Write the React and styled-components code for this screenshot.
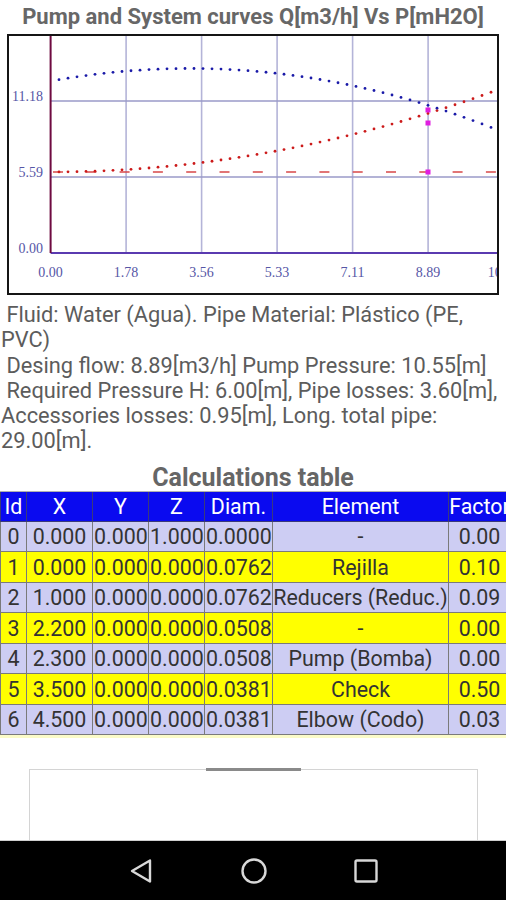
import React from "react";
import styled, { createGlobalStyle } from "styled-components";

const GlobalStyle = createGlobalStyle`
  html, body {
    margin: 0;
    padding: 0;
    background: #fff;
    overflow: hidden;
  }
  body {
    font-family: Roboto, "Noto Sans", sans-serif;
  }
`;

// chart geometry, in page pixels
const X0 = 50.6;
const XSTEP = 75.5;
const Y_AXIS = 253;
const XLABELS = ["0.00", "1.78", "3.56", "5.33", "7.11", "8.89", "10.67"];
const YLABELS = [
  { label: "11.18", y: 101 },
  { label: "5.59", y: 177 },
  { label: "0.00", y: 253 },
];

const pumpY = (x) => 68.5 + 6.5e-4 * (x - 190) * (x - 190);
const systemY = (x) => 172 - 4.1e-4 * (x - 50) * (x - 50);

const dotsX = [];
for (let x = 59; x <= 496; x += 9) dotsX.push(x);

const rows = [
  { id: 0, x: "0.000", y: "0.0000", z: "1.0000", d: "0.0000", el: "-", f: "0.00" },
  { id: 1, x: "0.000", y: "0.0000", z: "0.0000", d: "0.0762", el: "Rejilla", f: "0.10" },
  { id: 2, x: "1.000", y: "0.0000", z: "0.0000", d: "0.0762", el: "Reducers (Reduc.)", f: "0.09" },
  { id: 3, x: "2.200", y: "0.0000", z: "0.0000", d: "0.0508", el: "-", f: "0.00" },
  { id: 4, x: "2.300", y: "0.0000", z: "0.0000", d: "0.0508", el: "Pump (Bomba)", f: "0.00" },
  { id: 5, x: "3.500", y: "0.0000", z: "0.0000", d: "0.0381", el: "Check", f: "0.50" },
  { id: 6, x: "4.500", y: "0.0000", z: "0.0000", d: "0.0381", el: "Elbow (Codo)", f: "0.03" },
];

const colWidths = [26, 66, 56, 56, 68, 176, 62];

const PumpChart = () => (
  <ChartBox>
    <svg width="488" height="257" viewBox="9 36 488 257">
      {XLABELS.slice(1, 6).map((_, i) => (
        <line
          key={"v" + i}
          x1={X0 + (i + 1) * XSTEP}
          x2={X0 + (i + 1) * XSTEP}
          y1={36}
          y2={Y_AXIS}
          stroke="#b4b4d8"
          strokeWidth="1.6"
        />
      ))}
      {YLABELS.slice(0, 2).map((l) => (
        <line key={l.label} x1={X0} x2={497} y1={l.y} y2={l.y} stroke="#9a9ac8" strokeWidth="1.4" />
      ))}
      <line x1={X0} x2={497} y1={Y_AXIS} y2={Y_AXIS} stroke="#5a3ab0" strokeWidth="2.2" />
      <line x1={X0} x2={X0} y1={36} y2={Y_AXIS} stroke="#6e0a40" strokeWidth="2" />

      {YLABELS.map((l) => (
        <AxisText key={l.label} x={43} y={l.y} textAnchor="end">
          {l.label}
        </AxisText>
      ))}
      {XLABELS.map((l, i) => (
        <AxisText key={l} x={X0 + i * XSTEP} y={277} textAnchor="middle">
          {l}
        </AxisText>
      ))}

      <line
        x1={53}
        x2={497}
        y1={172}
        y2={172}
        stroke="#d84848"
        strokeWidth="1.6"
        strokeDasharray="10 23.3"
      />
      {dotsX.map((x) => (
        <circle key={"s" + x} cx={x} cy={systemY(x)} r="1.4" fill="#cc1a1a" />
      ))}
      {dotsX.map((x) => (
        <circle key={"p" + x} cx={x} cy={pumpY(x)} r="1.4" fill="#1a1aa8" />
      ))}
      {[110, 123, 172].map((y) => (
        <rect key={y} x={425.5} y={y - 2.5} width="5" height="5" fill="#e01ee0" />
      ))}
    </svg>
  </ChartBox>
);

const App = () => (
  <Page>
    <GlobalStyle />
    <Title>Pump and System curves Q[m3/h] Vs P[mH2O]</Title>
    <PumpChart />
    <Summary>
      <Line> Fluid: Water (Agua). Pipe Material: Plástico (PE,</Line>
      <Line>PVC)</Line>
      <Line> Desing flow: 8.89[m3/h] Pump Pressure: 10.55[m]</Line>
      <Line> Required Pressure H: 6.00[m], Pipe losses: 3.60[m],</Line>
      <Line>Accessories losses: 0.95[m], Long. total pipe:</Line>
      <Line>29.00[m].</Line>
    </Summary>
    <SubTitle>Calculations table</SubTitle>
    <TableClip>
      <Table>
        <colgroup>
          {colWidths.map((w, i) => (
            <col key={i} style={{ width: w }} />
          ))}
        </colgroup>
        <thead>
          <tr>
            {["Id", "X", "Y", "Z", "Diam.", "Element", "Factor"].map((h) => (
              <Th key={h}>{h}</Th>
            ))}
          </tr>
        </thead>
        <tbody>
          {rows.map((r) => (
            <Row key={r.id} $odd={r.id % 2 === 1}>
              <Td>{r.id}</Td>
              <Td>{r.x}</Td>
              <Td $clip>{r.y}</Td>
              <Td $clip>{r.z}</Td>
              <Td $clip>{r.d}</Td>
              <Td>{r.el}</Td>
              <Td>{r.f}</Td>
            </Row>
          ))}
        </tbody>
      </Table>
      <NextRowEdge />
    </TableClip>
    <Spacer />
    <Sheet>
      <Handle />
    </Sheet>
    <NavBar>
      <svg width="24" height="26" viewBox="0 0 24 26">
        <path d="M21 2.5 L3 13 L21 23.5 Z" fill="none" stroke="#d8d8d8" strokeWidth="2.4" strokeLinejoin="round" />
      </svg>
      <svg width="26" height="26" viewBox="0 0 26 26">
        <circle cx="13" cy="13" r="11.5" fill="none" stroke="#d8d8d8" strokeWidth="2.4" />
      </svg>
      <svg width="24" height="24" viewBox="0 0 24 24">
        <rect x="1.5" y="1.5" width="21" height="21" rx="1.5" fill="none" stroke="#d8d8d8" strokeWidth="2.4" />
      </svg>
    </NavBar>
  </Page>
);

const Page = styled.div`
  width: 506px;
  height: 900px;
  display: flex;
  flex-direction: column;
  overflow: hidden;
`;

const Title = styled.div`
  height: 34px;
  line-height: 33px;
  text-align: center;
  font-size: 22px;
  font-weight: 700;
  color: #676767;
  white-space: nowrap;
  flex-shrink: 0;
`;

const ChartBox = styled.div`
  width: 492px;
  height: 261px;
  margin-left: 7px;
  flex-shrink: 0;
  box-sizing: border-box;
  border: 2px solid #151515;
  overflow: hidden;
  svg {
    display: block;
  }
`;

const AxisText = styled.text`
  font-family: "Liberation Serif", "Times New Roman", serif;
  font-size: 14px;
  fill: #5656a6;
`;

const Summary = styled.div`
  padding-top: 7px;
  color: #5c5c5c;
  font-size: 21.8px;
  line-height: 25.3px;
  flex-shrink: 0;
`;

const Line = styled.div`
  white-space: pre;
  padding-left: 1px;
`;

const SubTitle = styled.div`
  height: 27px;
  padding-top: 10px;
  line-height: 28px;
  text-align: center;
  font-size: 25px;
  font-weight: 700;
  color: #666;
  border-bottom: 1px solid #b0b0b0;
  flex-shrink: 0;
`;

const TableClip = styled.div`
  width: 506px;
  overflow: hidden;
  flex-shrink: 0;
`;

const Table = styled.table`
  border-collapse: collapse;
  table-layout: fixed;
  width: ${colWidths.reduce((a, b) => a + b, 0)}px;
  font-size: 21.4px;
`;

const Th = styled.th`
  height: 29px;
  padding: 0;
  background: #0a0af0;
  color: #fff;
  font-weight: 400;
  text-align: center;
  white-space: nowrap;
  overflow: hidden;
  border: 1px solid #3a3a7a;
  border-top: none;
`;

const Row = styled.tr`
  background: ${(p) => (p.$odd ? "#ffff00" : "#cdcdf3")};
`;

const Td = styled.td`
  height: 29.5px;
  padding: 0;
  padding-left: ${(p) => (p.$clip ? "1px" : "0")};
  color: #333;
  text-align: ${(p) => (p.$clip ? "left" : "center")};
  white-space: nowrap;
  overflow: hidden;
  border: 1px solid #7a7a7a;
`;

const NextRowEdge = styled.div`
  height: 3px;
  background: #fbfbc8;
`;

const Spacer = styled.div`
  height: 31px;
  flex-shrink: 0;
`;

const Sheet = styled.div`
  flex: 1;
  margin: 0 28px 0 29px;
  border: 1px solid #d4d4d4;
  border-bottom: none;
  display: flex;
  justify-content: center;
`;

const Handle = styled.div`
  width: 95px;
  height: 3px;
  margin-top: -2px;
  background: #8a8a8a;
`;

const NavBar = styled.div`
  height: 59px;
  flex-shrink: 0;
  background: #000;
  border-top: 1px solid #cfcfcf;
  display: flex;
  align-items: center;
  justify-content: space-between;
  padding: 0 128px 0 129px;
`;

export default App;
